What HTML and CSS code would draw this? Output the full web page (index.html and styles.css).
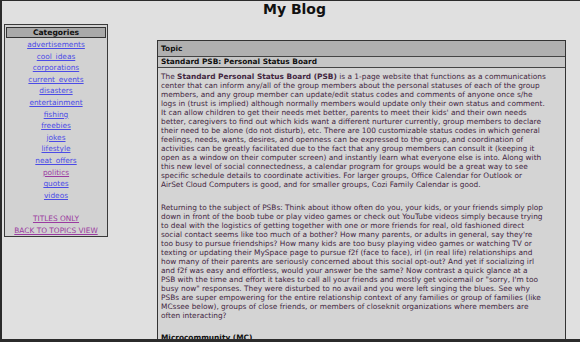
FILE: index.html
```html
<!DOCTYPE html>
<html lang="en">
<head>
<meta charset="utf-8">
<title>My Blog</title>
<link rel="stylesheet" href="styles.css">
</head>
<body>
<div class="frame">
  <h1 class="title">My Blog</h1>
  <div class="layout">
    <aside class="sidebar">
      <div class="side-head">Categories</div>
      <ul class="cats">
        <li><a href="#">advertisements</a></li>
        <li><a href="#">cool_ideas</a></li>
        <li><a href="#">corporations</a></li>
        <li><a href="#">current_events</a></li>
        <li><a href="#">disasters</a></li>
        <li><a href="#">entertainment</a></li>
        <li><a href="#">fishing</a></li>
        <li><a href="#">freebies</a></li>
        <li><a href="#">jokes</a></li>
        <li><a href="#">lifestyle</a></li>
        <li><a href="#">neat_offers</a></li>
        <li><a href="#" class="visited">politics</a></li>
        <li><a href="#">quotes</a></li>
        <li><a href="#">videos</a></li>
      </ul>
      <ul class="cats nav">
        <li><a href="#" class="visited">TITLES ONLY</a></li>
        <li><a href="#" class="visited">BACK TO TOPICS VIEW</a></li>
      </ul>
    </aside>
    <main class="post">
      <div class="row-topic">Topic</div>
      <div class="row-title">Standard PSB: Personal Status Board</div>
      <div class="post-body">
        <p>The <b>Standard Personal Status Board (PSB)</b> is a 1-page website that functions as a communications<br>
center that can inform any/all of the group members about the personal statuses of each of the group<br>
members, and any group member can update/edit status codes and comments of anyone once s/he<br>
logs in (trust is implied) although normally members would update only their own status and comment.<br>
It can allow children to get their needs met better, parents to meet their kids' and their own needs<br>
better, caregivers to find out which kids want a different nurturer currently, group members to declare<br>
their need to be alone (do not disturb), etc. There are 100 customizable status codes in which general<br>
feelings, needs, wants, desires, and openness can be expressed to the group, and coordination of<br>
activities can be greatly facilitated due to the fact that any group members can consult it (keeping it<br>
open as a window on their computer screen) and instantly learn what everyone else is into. Along with<br>
this new level of social connectedness, a calendar program for groups would be a great way to see<br>
specific schedule details to coordinate activities. For larger groups, Office Calendar for Outlook or<br>
AirSet Cloud Computers is good, and for smaller groups, Cozi Family Calendar is good.</p>
        <p>Returning to the subject of PSBs: Think about ithow often do you, your kids, or your friends simply plop<br>
down in front of the boob tube or play video games or check out YouTube videos simply because trying<br>
to deal with the logistics of getting together with one or more friends for real, old fashioned direct<br>
social contact seems like too much of a bother? How many parents, or adults in general, say they're<br>
too busy to pursue friendships? How many kids are too busy playing video games or watching TV or<br>
texting or updating their MySpace page to pursue f2f (face to face), irl (in real life) relationships and<br>
how many of their parents are seriously concerned about this social opt-out? And yet if socializing irl<br>
and f2f was easy and effortless, would your answer be the same? Now contrast a quick glance at a<br>
PSB with the time and effort it takes to call all your friends and mostly get voicemail or "sorry, I'm too<br>
busy now" responses. They were disturbed to no avail and you were left singing the blues. See why<br>
PSBs are super empowering for the entire relationship context of any families or group of families (like<br>
MCssee below), groups of close friends, or members of closeknit organizations where members are<br>
often interacting?</p>
        <p class="sub"><b>Microcommunity (MC)</b></p>
      </div>
    </main>
  </div>
</div>
</body>
</html>
```

FILE: styles.css
```css
html, body {
  margin: 0;
  padding: 0;
  background: #e0e0e0;
}

.frame {
  width: 580px;
  height: 342px;
  box-sizing: border-box;
  border-left: 2px solid #2b2b2b;
  border-top: 1px solid #2b2b2b;
  border-bottom: 3px solid #2b2b2b;
  background: #e0e0e0;
  overflow: hidden;
  font-family: "DejaVu Sans", Verdana, sans-serif;
  color: #111;
}

.title {
  margin: 0;
  height: 17px;
  padding: 0 0 6px 7px;
  font-size: 14px;
  line-height: 17px;
  font-weight: bold;
  text-align: center;
  color: #111;
}

.layout {
  display: flex;
  align-items: flex-start;
  gap: 49px;
  padding-left: 2px;
}

.sidebar {
  width: 100px;
  flex: none;
  border: 1px solid #3a3a3a;
  background: #d2d2d2;
  padding: 2px 1px 0;
}

.side-head {
  border: 1px solid #333;
  background: #a9a9a9;
  font-size: 7.6px;
  font-weight: bold;
  line-height: 9px;
  text-align: center;
  color: #111;
}

.cats {
  list-style: none;
  margin: 1px 0 0;
  padding: 0;
  text-align: center;
  font-size: 7.4px;
  line-height: 11.6px;
}

.cats.nav {
  margin-top: 11.6px;
}

.cats a {
  color: #4b4be6;
  text-decoration: underline;
}

.cats a.visited {
  color: #9a3aa0;
}

.post {
  width: 407px;
  flex: none;
  margin-top: 16px;
  border: 1px solid #333;
  background: #d4d4d4;
}

.row-topic {
  background: #b0b0b0;
  height: 15px;
  line-height: 15px;
  padding: 0 3px;
  font-size: 7.4px;
  font-weight: bold;
  border-bottom: 1px solid #444;
  color: #111;
}

.row-title {
  background: #c6c6c6;
  height: 10px;
  line-height: 10px;
  padding: 0 3px;
  font-size: 7.4px;
  font-weight: bold;
  border-bottom: 1px solid #444;
  color: #111;
}

.post-body {
  padding: 4px 3px;
  font-size: 7.4px;
  line-height: 9px;
  color: #43263f;
  white-space: nowrap;
}

.post-body p {
  margin: 0 0 13.5px;
}

.post-body .sub {
  color: #111;
}
```
